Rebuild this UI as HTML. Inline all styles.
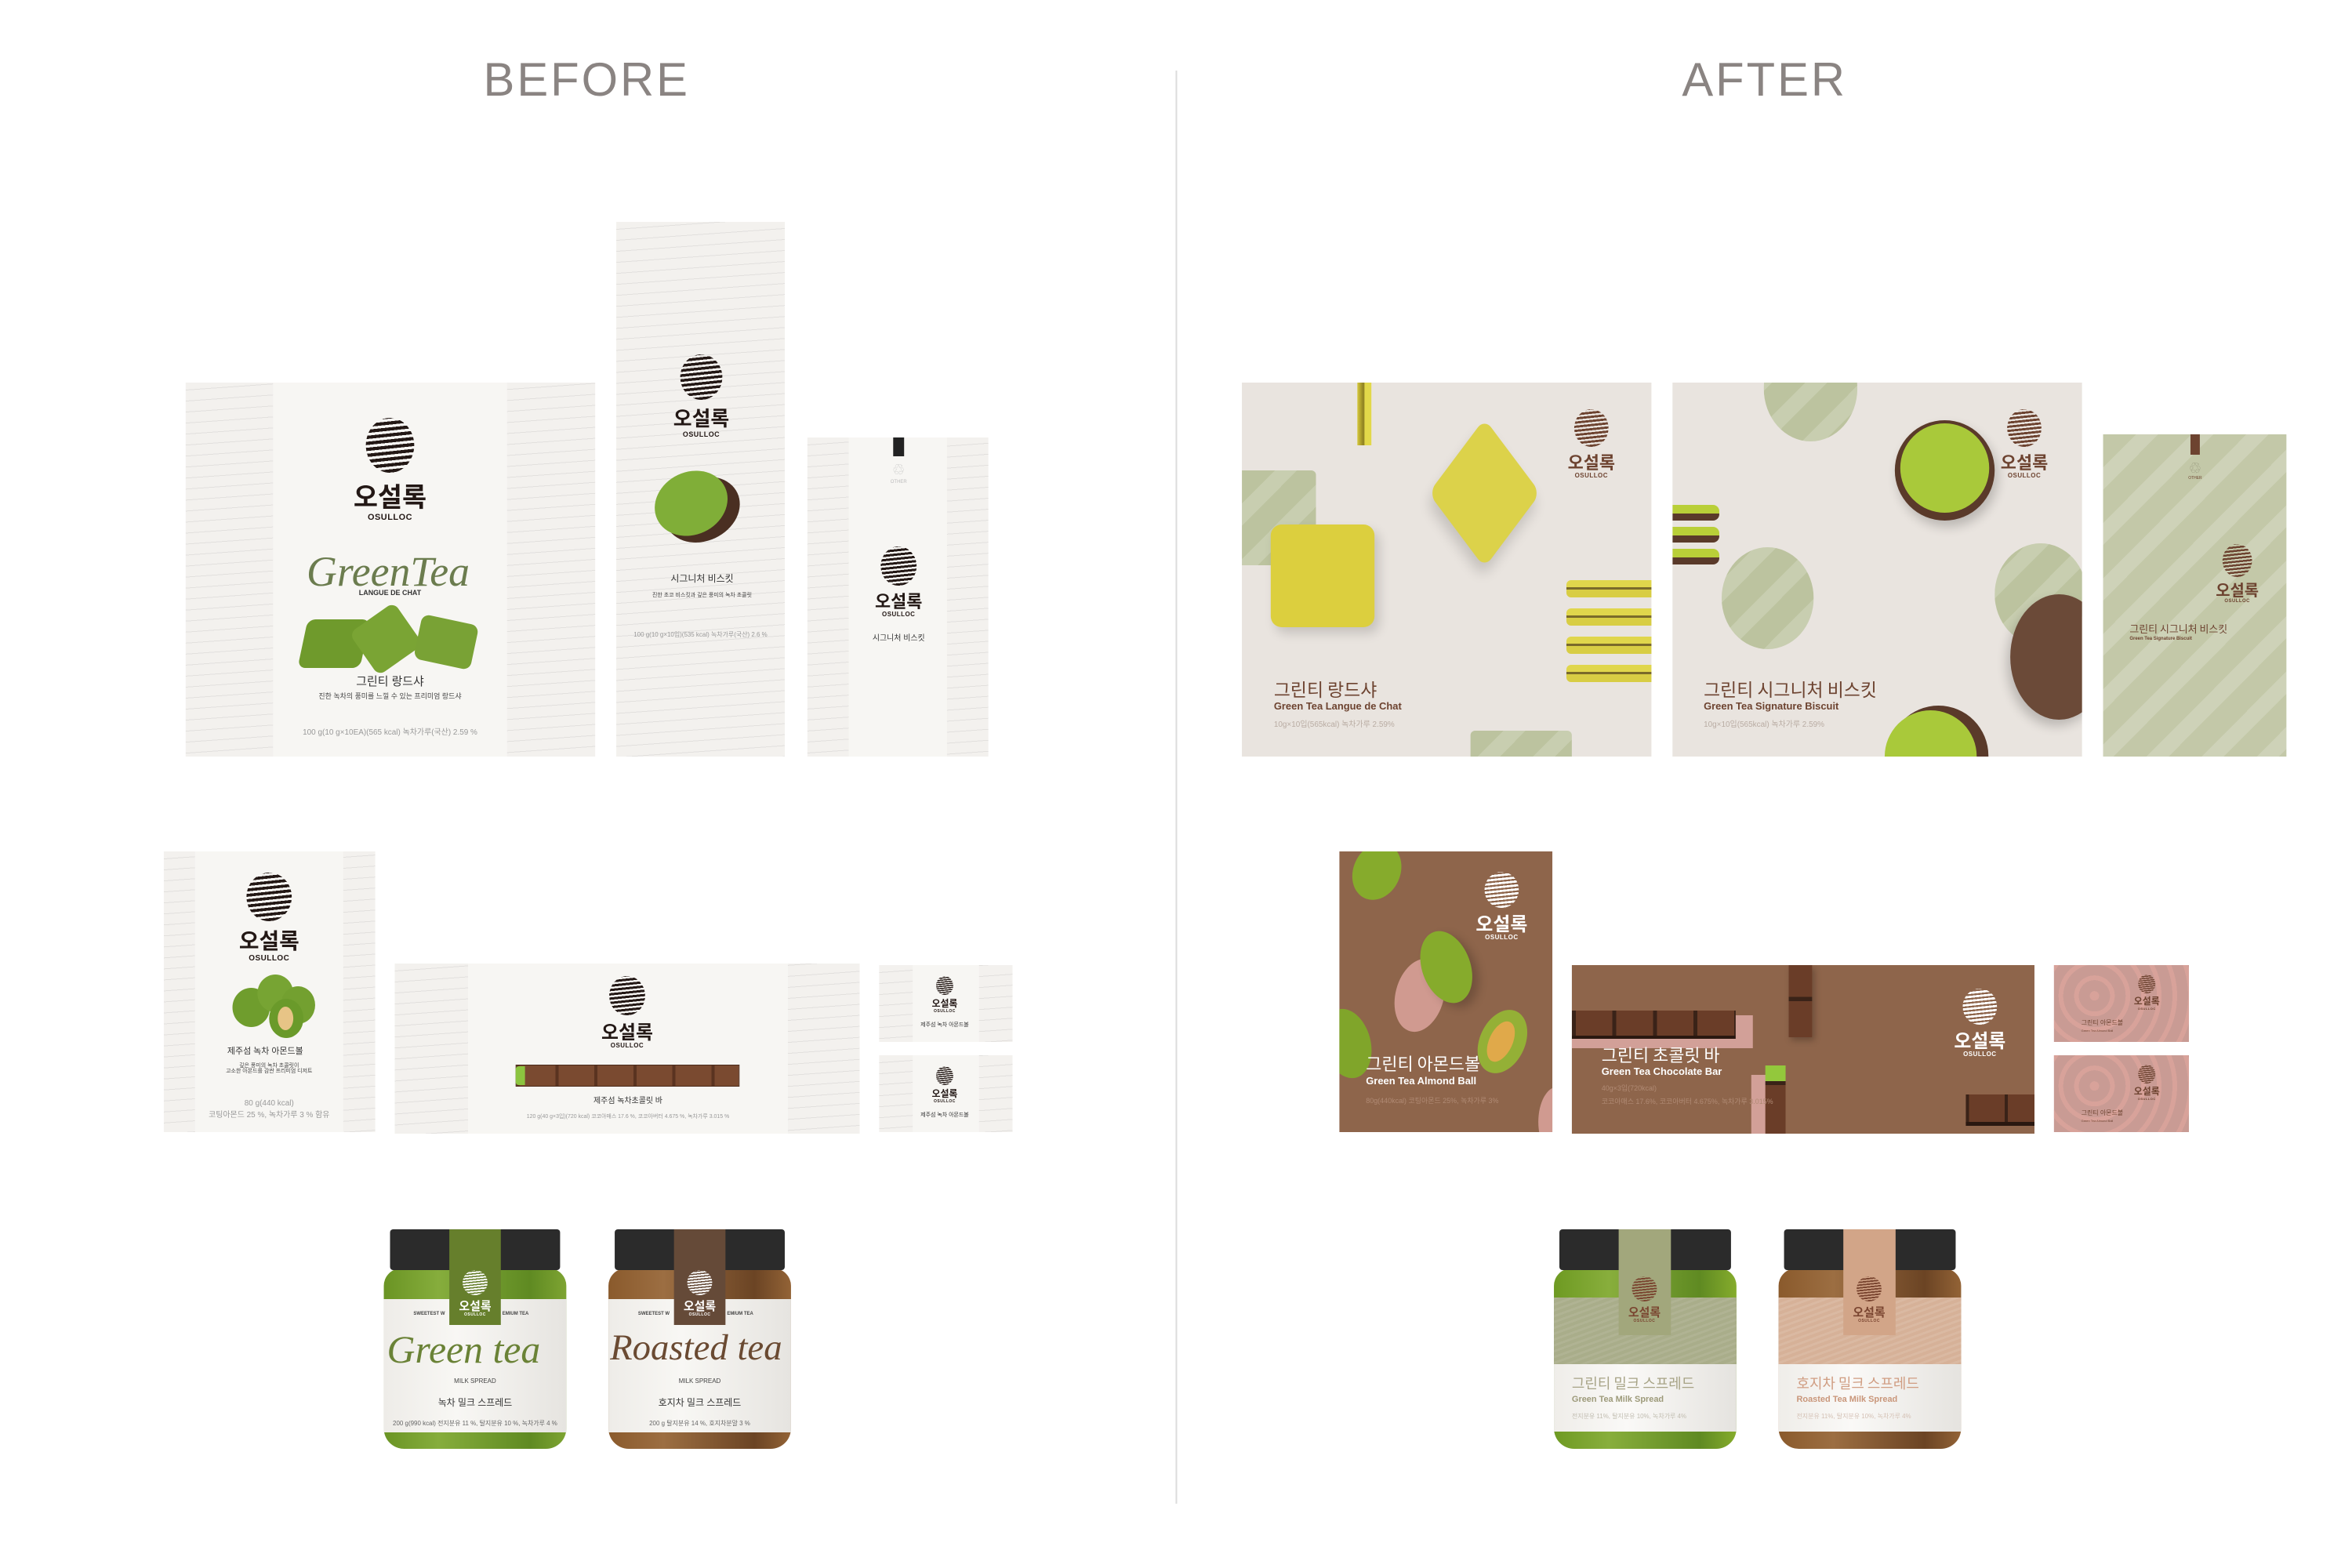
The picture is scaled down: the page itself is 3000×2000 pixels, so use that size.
<!DOCTYPE html>
<html><head><meta charset="utf-8">
<style>
*{margin:0;padding:0;box-sizing:border-box}
body{width:3000px;height:2000px;background:#fff;position:relative;overflow:hidden;font-family:"Liberation Sans","Noto Sans CJK KR",sans-serif}
#w{position:absolute;left:0;top:0;width:3000px;height:2000px;transform:scaleX(0.995);transform-origin:0 0}
.a{position:absolute}
.t{position:absolute;white-space:nowrap;line-height:1}
.c{text-align:center}
.wave{background:#f3f1ee repeating-linear-gradient(176deg,transparent 0 9px,rgba(0,0,0,.07) 9px 10px,transparent 10px 14px)}
.ctr{background:#f7f6f3}
.lg{position:absolute;display:flex;flex-direction:column;align-items:center;width:240px;margin-left:-120px}
.mk{border-radius:50%;background:repeating-linear-gradient(174deg,var(--k) 0 5.5%,transparent 5.5% 10%)}
.ko{font-family:"Noto Sans CJK KR",sans-serif;font-weight:700;line-height:1;color:var(--k)}
.en{font-weight:700;line-height:1;color:var(--k);letter-spacing:.5px}
.script{font-family:"Liberation Serif",serif;font-style:italic;position:absolute;white-space:nowrap;line-height:1}
.gp{background:#bcc39f repeating-linear-gradient(135deg,rgba(255,255,255,.0) 0 30px,rgba(255,255,255,.18) 30px 50px)}
</style></head><body><div id="w">

<div class="t c" style="left:552px;top:72px;width:400px;font-size:60px;color:#8a8482;letter-spacing:3px">BEFORE</div>
<div class="t c" style="left:2062px;top:72px;width:400px;font-size:60px;color:#8a8482;letter-spacing:3px">AFTER</div>
<div class="a" style="left:1507px;top:90px;width:2px;height:1828px;background:#dcdcdc"></div>

<!-- BEFORE row1 -->
<div class="a wave" style="left:238px;top:488px;width:525px;height:477px"></div>
<div class="a ctr" style="left:350px;top:488px;width:300px;height:477px"></div>
<div class="lg" style="left:500px;top:533px;--k:#231815"><div class="mk" style="width:62px;height:70px"></div><div class="ko" style="font-size:34px;margin-top:12px">오설록</div><div class="en" style="font-size:11px;margin-top:6px">OSULLOC</div></div>
<div class="script" style="left:393px;top:702px;font-size:54px;color:#6b7c4e">GreenTea</div>
<div class="t c" style="left:400px;top:752px;width:200px;font-size:9px;font-weight:700;color:#333">LANGUE DE CHAT</div>
<div class="a" style="left:388px;top:790px;width:80px;height:62px;background:#6f9a2c;border-radius:10px;transform:skewX(-12deg)"></div>
<div class="a" style="left:460px;top:782px;width:70px;height:66px;background:#7aa434;border-radius:10px;transform:rotate(-35deg)"></div>
<div class="a" style="left:535px;top:790px;width:74px;height:58px;background:#79a235;border-radius:10px;transform:rotate(12deg)"></div>
<div class="t c" style="left:400px;top:862px;width:200px;font-size:15px;color:#333">그린티 랑드샤</div>
<div class="t c" style="left:380px;top:884px;width:240px;font-size:9px;color:#444">진한 녹차의 풍미를 느낄 수 있는 프리미엄 랑드샤</div>
<div class="t c" style="left:370px;top:930px;width:260px;font-size:10px;color:#999">100 g(10 g×10EA)(565 kcal) 녹차가루(국산) 2.59 %</div>

<div class="a wave" style="left:790px;top:283px;width:216px;height:682px"></div>
<div class="lg" style="left:899px;top:452px;--k:#231815"><div class="mk" style="width:54px;height:58px"></div><div class="ko" style="font-size:26px;margin-top:10px">오설록</div><div class="en" style="font-size:9px;margin-top:4px">OSULLOC</div></div>
<div class="a" style="left:850px;top:610px;width:100px;height:80px;border-radius:50%;background:#4a2f22;transform:rotate(-25deg)"></div>
<div class="a" style="left:838px;top:602px;width:96px;height:80px;border-radius:50%;background:#80ae38;transform:rotate(-25deg)"></div>
<div class="t c" style="left:820px;top:732px;width:160px;font-size:12px;color:#333">시그니처 비스킷</div>
<div class="t c" style="left:810px;top:756px;width:180px;font-size:7px;color:#444">진한 초코 비스킷과 깊은 풍미의 녹차 초콜릿</div>
<div class="t c" style="left:795px;top:806px;width:206px;font-size:8px;color:#999">100 g(10 g×10입)(535 kcal) 녹차가루(국산) 2.6 %</div>

<div class="a wave" style="left:1035px;top:558px;width:232px;height:407px"></div>
<div class="a ctr" style="left:1088px;top:558px;width:126px;height:407px"></div>
<div class="a" style="left:1145px;top:558px;width:14px;height:24px;background:#222"></div>
<div class="t c" style="left:1120px;top:592px;width:64px;font-size:14px;color:#bbb">♲</div>
<div class="t c" style="left:1120px;top:612px;width:64px;font-size:6px;color:#bbb">OTHER</div>
<div class="lg" style="left:1152px;top:697px;--k:#231815"><div class="mk" style="width:46px;height:50px"></div><div class="ko" style="font-size:22px;margin-top:8px">오설록</div><div class="en" style="font-size:8px;margin-top:3px">OSULLOC</div></div>
<div class="t c" style="left:1100px;top:810px;width:104px;font-size:10px;color:#333">시그니처 비스킷</div>

<!-- BEFORE row2 -->
<div class="a wave" style="left:210px;top:1086px;width:271px;height:358px"></div>
<div class="a ctr" style="left:250px;top:1086px;width:190px;height:358px"></div>
<div class="lg" style="left:345px;top:1113px;--k:#231815"><div class="mk" style="width:58px;height:62px"></div><div class="ko" style="font-size:28px;margin-top:10px">오설록</div><div class="en" style="font-size:10px;margin-top:5px">OSULLOC</div></div>
<div class="a" style="left:298px;top:1260px;width:48px;height:50px;border-radius:50%;background:#6f9d2d"></div>
<div class="a" style="left:330px;top:1243px;width:46px;height:48px;border-radius:50%;background:#77a433"></div>
<div class="a" style="left:360px;top:1258px;width:44px;height:48px;border-radius:50%;background:#73a030"></div>
<div class="a" style="left:345px;top:1274px;width:44px;height:50px;border-radius:50%;background:#6a9a2a"></div>
<div class="a" style="left:356px;top:1284px;width:20px;height:30px;border-radius:50%;background:#e7c486"></div>
<div class="t c" style="left:240px;top:1336px;width:200px;font-size:11px;color:#333">제주섬 녹차 아몬드볼</div>
<div class="t c" style="left:250px;top:1356px;width:190px;font-size:7px;color:#444">깊은 풍미의 녹차 초콜릿이<br>고소한 아몬드를 감싼 프리미엄 디저트</div>
<div class="t c" style="left:230px;top:1403px;width:230px;font-size:10px;color:#999">80 g(440 kcal)</div>
<div class="t c" style="left:230px;top:1418px;width:230px;font-size:10px;color:#999">코팅아몬드 25 %, 녹차가루 3 % 함유</div>

<div class="a wave" style="left:506px;top:1229px;width:596px;height:217px"></div>
<div class="a ctr" style="left:600px;top:1229px;width:410px;height:217px"></div>
<div class="lg" style="left:804px;top:1245px;--k:#231815"><div class="mk" style="width:46px;height:50px"></div><div class="ko" style="font-size:24px;margin-top:8px">오설록</div><div class="en" style="font-size:8px;margin-top:3px">OSULLOC</div></div>
<div class="a" style="left:661px;top:1358px;width:287px;height:28px;background:repeating-linear-gradient(90deg,#5a3320 0 4px,#7a4a30 4px 50px);border:1px solid #4a2a1a"></div>
<div class="a" style="left:661px;top:1360px;width:12px;height:24px;background:#8cc43f;border-radius:4px 0 0 4px"></div>
<div class="t c" style="left:700px;top:1400px;width:210px;font-size:10px;color:#333">제주섬 녹차초콜릿 바</div>
<div class="t c" style="left:600px;top:1421px;width:410px;font-size:7px;color:#999">120 g(40 g×3입)(720 kcal) 코코아매스 17.6 %, 코코아버터 4.675 %, 녹차가루 3.015 %</div>

<div class="a wave" style="left:1127px;top:1231px;width:171px;height:98px"></div>
<div class="a ctr" style="left:1170px;top:1231px;width:85px;height:98px"></div>
<div class="lg" style="left:1211px;top:1245px;--k:#231815"><div class="mk" style="width:22px;height:24px"></div><div class="ko" style="font-size:12px;margin-top:5px">오설록</div><div class="en" style="font-size:5px;margin-top:2px">OSULLOC</div></div>
<div class="t c" style="left:1161px;top:1304px;width:100px;font-size:7px;color:#333">제주섬 녹차 아몬드볼</div>
<div class="a wave" style="left:1127px;top:1346px;width:171px;height:98px"></div>
<div class="a ctr" style="left:1170px;top:1346px;width:85px;height:98px"></div>
<div class="lg" style="left:1211px;top:1360px;--k:#231815"><div class="mk" style="width:22px;height:24px"></div><div class="ko" style="font-size:12px;margin-top:5px">오설록</div><div class="en" style="font-size:5px;margin-top:2px">OSULLOC</div></div>
<div class="t c" style="left:1161px;top:1419px;width:100px;font-size:7px;color:#333">제주섬 녹차 아몬드볼</div>

<!-- BEFORE jars -->
<div class="a" style="left:492px;top:1618px;width:234px;height:230px;border-radius:22px 22px 26px 26px;background:linear-gradient(90deg,#6a9424,#86ad3c 30%,#5f8a22 80%,#7ea432)"></div>
<div class="a" style="left:500px;top:1568px;width:218px;height:52px;border-radius:4px;background:#2b2b2b"></div>
<div class="a" style="left:492px;top:1657px;width:234px;height:170px;background:linear-gradient(90deg,#eeece8,#f8f7f4 40%,#e6e4e0)"></div>
<div class="a" style="left:576px;top:1568px;width:66px;height:122px;background:#667f2c"></div>
<div class="lg" style="left:609px;top:1620px;--k:#fff"><div class="mk" style="width:32px;height:32px"></div><div class="ko" style="font-size:15px;margin-top:6px">오설록</div><div class="en" style="font-size:5px;margin-top:2px">OSULLOC</div></div>
<div class="t" style="left:530px;top:1673px;font-size:6px;color:#444;font-weight:700">SWEETEST W</div>
<div class="t" style="left:644px;top:1673px;font-size:6px;color:#444;font-weight:700">EMIUM TEA</div>
<div class="script" style="left:496px;top:1696px;font-size:50px;color:#6a8236">Green tea</div>
<div class="t c" style="left:559px;top:1758px;width:100px;font-size:8px;color:#444">MILK SPREAD</div>
<div class="t c" style="left:529px;top:1783px;width:160px;font-size:12px;color:#333">녹차 밀크 스프레드</div>
<div class="t c" style="left:492px;top:1812px;width:234px;font-size:8px;color:#666">200 g(990 kcal) 전지분유 11 %, 탈지분유 10 %, 녹차가루 4 %</div>

<div class="a" style="left:780px;top:1618px;width:234px;height:230px;border-radius:22px 22px 26px 26px;background:linear-gradient(90deg,#8a5a2c,#9c6e42 30%,#6b4424 80%,#936336)"></div>
<div class="a" style="left:788px;top:1568px;width:218px;height:52px;border-radius:4px;background:#2b2b2b"></div>
<div class="a" style="left:780px;top:1657px;width:234px;height:170px;background:linear-gradient(90deg,#eeece8,#f8f7f4 40%,#e6e4e0)"></div>
<div class="a" style="left:864px;top:1568px;width:66px;height:122px;background:#654a38"></div>
<div class="lg" style="left:897px;top:1620px;--k:#fff"><div class="mk" style="width:32px;height:32px"></div><div class="ko" style="font-size:15px;margin-top:6px">오설록</div><div class="en" style="font-size:5px;margin-top:2px">OSULLOC</div></div>
<div class="t" style="left:818px;top:1673px;font-size:6px;color:#444;font-weight:700">SWEETEST W</div>
<div class="t" style="left:932px;top:1673px;font-size:6px;color:#444;font-weight:700">EMIUM TEA</div>
<div class="script" style="left:782px;top:1696px;font-size:47px;color:#6a4a32">Roasted tea</div>
<div class="t c" style="left:847px;top:1758px;width:100px;font-size:8px;color:#444">MILK SPREAD</div>
<div class="t c" style="left:817px;top:1783px;width:160px;font-size:12px;color:#333">호지차 밀크 스프레드</div>
<div class="t c" style="left:780px;top:1812px;width:234px;font-size:8px;color:#666">200 g 탈지분유 14 %, 호지차분말 3 %</div>

<!-- AFTER row1 -->
<div class="a" style="left:1592px;top:488px;width:525px;height:477px;background:#e9e4df;overflow:hidden">
 <div class="a gp" style="left:0;top:112px;width:95px;height:121px;border-radius:0 6px 6px 0"></div>
 <div class="a gp" style="left:293px;top:444px;width:130px;height:40px;border-radius:6px"></div>
 <div class="a" style="left:148px;top:0;width:18px;height:80px;background:linear-gradient(90deg,#d7c93c,#8a7c20 45%,#e2d84a 55%)"></div>
 <div class="a" style="left:252px;top:82px;width:118px;height:118px;background:#dcd24a;border-radius:14px;transform:rotate(45deg) skew(8deg,8deg);box-shadow:6px 10px 16px rgba(0,0,0,.15)"></div>
 <div class="a" style="left:37px;top:181px;width:133px;height:131px;background:#dccf3e;border-radius:14px;box-shadow:6px 8px 14px rgba(0,0,0,.15)"></div>
 <div class="a" style="left:416px;top:252px;width:120px;height:22px;background:linear-gradient(#e0d64c 0 40%,#7a6a2a 40% 55%,#d8cd44 55%);border-radius:6px"></div>
 <div class="a" style="left:416px;top:288px;width:120px;height:22px;background:linear-gradient(#e0d64c 0 40%,#7a6a2a 40% 55%,#d8cd44 55%);border-radius:6px"></div>
 <div class="a" style="left:416px;top:324px;width:120px;height:22px;background:linear-gradient(#e0d64c 0 40%,#7a6a2a 40% 55%,#d8cd44 55%);border-radius:6px"></div>
 <div class="a" style="left:416px;top:360px;width:120px;height:22px;background:linear-gradient(#e0d64c 0 40%,#7a6a2a 40% 55%,#d8cd44 55%);border-radius:6px"></div>
</div>
<div class="lg" style="left:2040px;top:522px;--k:#6d4330"><div class="mk" style="width:44px;height:48px"></div><div class="ko" style="font-size:22px;margin-top:8px">오설록</div><div class="en" style="font-size:8px;margin-top:3px">OSULLOC</div></div>
<div class="t" style="left:1633px;top:867px;font-size:23px;color:#6d4330;font-family:'Noto Sans CJK KR',sans-serif">그린티 랑드샤</div>
<div class="t" style="left:1633px;top:894px;font-size:13px;color:#6d4330;font-weight:700">Green Tea Langue de Chat</div>
<div class="t" style="left:1633px;top:920px;font-size:10px;color:#b9aca3">10g×10입(565kcal) 녹차가루 2.59%</div>

<div class="a" style="left:2144px;top:488px;width:525px;height:477px;background:#e9e4df;overflow:hidden">
 <div class="a gp" style="left:117px;top:-60px;width:120px;height:135px;border-radius:50%"></div>
 <div class="a gp" style="left:63px;top:210px;width:118px;height:130px;border-radius:50%"></div>
 <div class="a gp" style="left:413px;top:205px;width:118px;height:130px;border-radius:50%"></div>
 <div class="a" style="left:433px;top:270px;width:125px;height:160px;border-radius:50%;background:#6b4a38;box-shadow:-4px 8px 14px rgba(0,0,0,.2)"></div>
 <div class="a" style="left:0;top:156px;width:60px;height:20px;background:linear-gradient(#b9cf38 0 55%,#5a3a2a 55%);border-radius:0 8px 8px 0"></div>
 <div class="a" style="left:0;top:184px;width:60px;height:20px;background:linear-gradient(#b9cf38 0 55%,#5a3a2a 55%);border-radius:0 8px 8px 0"></div>
 <div class="a" style="left:0;top:212px;width:60px;height:20px;background:linear-gradient(#b9cf38 0 55%,#5a3a2a 55%);border-radius:0 8px 8px 0"></div>
 <div class="a" style="left:285px;top:48px;width:128px;height:128px;border-radius:50%;background:#5a3a2a;box-shadow:4px 8px 14px rgba(0,0,0,.2)"></div>
 <div class="a" style="left:292px;top:52px;width:114px;height:114px;border-radius:50%;background:#a9c93a"></div>
 <div class="a" style="left:277px;top:412px;width:128px;height:128px;border-radius:50%;background:#5a3a2a"></div>
 <div class="a" style="left:272px;top:418px;width:118px;height:118px;border-radius:50%;background:#a9c93a"></div>
</div>
<div class="lg" style="left:2595px;top:522px;--k:#6d4330"><div class="mk" style="width:44px;height:48px"></div><div class="ko" style="font-size:22px;margin-top:8px">오설록</div><div class="en" style="font-size:8px;margin-top:3px">OSULLOC</div></div>
<div class="t" style="left:2184px;top:867px;font-size:23px;color:#6d4330;font-family:'Noto Sans CJK KR',sans-serif">그린티 시그니처 비스킷</div>
<div class="t" style="left:2184px;top:894px;font-size:13px;color:#6d4330;font-weight:700">Green Tea Signature Biscuit</div>
<div class="t" style="left:2184px;top:920px;font-size:10px;color:#b9aca3">10g×10입(565kcal) 녹차가루 2.59%</div>

<div class="a gp" style="left:2696px;top:554px;width:235px;height:411px;background-color:#c3c8a8"></div>
<div class="a" style="left:2808px;top:554px;width:12px;height:26px;background:#6d4330"></div>
<div class="t c" style="left:2794px;top:590px;width:40px;font-size:14px;color:#8a8a70">♲</div>
<div class="t c" style="left:2794px;top:608px;width:40px;font-size:5px;color:#6d4330">OTHER</div>
<div class="lg" style="left:2868px;top:694px;--k:#6d4330"><div class="mk" style="width:38px;height:42px"></div><div class="ko" style="font-size:20px;margin-top:6px">오설록</div><div class="en" style="font-size:6px;margin-top:2px">OSULLOC</div></div>
<div class="t" style="left:2730px;top:795px;font-size:13px;color:#6d4330;font-family:'Noto Sans CJK KR',sans-serif">그린티 시그니처 비스킷</div>
<div class="t" style="left:2730px;top:812px;font-size:6px;color:#6d4330;font-weight:700">Green Tea Signature Biscuit</div>

<!-- AFTER row2 -->
<div class="a" style="left:1717px;top:1086px;width:273px;height:358px;background:#8e654b;overflow:hidden">
 <div class="a" style="left:18px;top:-12px;width:60px;height:75px;border-radius:50%;background:#86ab2c;transform:rotate(25deg)"></div>
 <div class="a" style="left:72px;top:136px;width:62px;height:95px;border-radius:50%;background:#d09a90;transform:rotate(15deg)"></div>
 <div class="a" style="left:106px;top:100px;width:62px;height:95px;border-radius:50%;background:#86ab2c;transform:rotate(-20deg);box-shadow:6px 8px 12px rgba(0,0,0,.2)"></div>
 <div class="a" style="left:-20px;top:200px;width:60px;height:90px;border-radius:50%;background:#80a52a;transform:rotate(-15deg)"></div>
 <div class="a" style="left:180px;top:200px;width:58px;height:85px;border-radius:50%;background:#94b036;transform:rotate(25deg)"></div>
 <div class="a" style="left:192px;top:215px;width:30px;height:55px;border-radius:50%;background:#e0a94a;transform:rotate(25deg)"></div>
 <div class="a" style="left:255px;top:300px;width:50px;height:90px;border-radius:50%;background:#d09a90"></div>
</div>
<div class="lg" style="left:1925px;top:1112px;--k:#fff"><div class="mk" style="width:44px;height:46px"></div><div class="ko" style="font-size:24px;margin-top:7px">오설록</div><div class="en" style="font-size:8px;margin-top:3px">OSULLOC</div></div>
<div class="t" style="left:1751px;top:1345px;font-size:22px;color:#fff;font-family:'Noto Sans CJK KR',sans-serif">그린티 아몬드볼</div>
<div class="t" style="left:1751px;top:1372px;font-size:13px;color:#fff;font-weight:700">Green Tea Almond Ball</div>
<div class="t" style="left:1751px;top:1400px;font-size:9px;color:#b08a74">80g(440kcal) 코팅아몬드 25%, 녹차가루 3%</div>

<div class="a" style="left:2015px;top:1231px;width:593px;height:215px;background:#8e654b;overflow:hidden">
 <div class="a" style="left:0;top:64px;width:232px;height:42px;background:#d2a098"></div>
 <div class="a" style="left:0;top:58px;width:210px;height:36px;background:repeating-linear-gradient(90deg,#3a2318 0 5px,#6a3d28 5px 52px);border-bottom:4px solid #2a1810"></div>
 <div class="a" style="left:278px;top:0;width:30px;height:92px;background:linear-gradient(#6a3d28 0 44%,#3a2318 44% 50%,#6a3d28 50%);box-shadow:3px 4px 8px rgba(0,0,0,.25)"></div>
 <div class="a" style="left:230px;top:140px;width:22px;height:80px;background:#d2a098"></div>
 <div class="a" style="left:248px;top:128px;width:26px;height:90px;background:linear-gradient(#93c83c 0 22%,#3a2318 22% 28%,#6a3d28 28%)"></div>
 <div class="a" style="left:505px;top:165px;width:90px;height:40px;background:repeating-linear-gradient(90deg,#3a2318 0 4px,#6a3d28 4px 50px);border-bottom:5px solid #2a1810"></div>
</div>
<div class="lg" style="left:2538px;top:1261px;--k:#fff"><div class="mk" style="width:44px;height:46px"></div><div class="ko" style="font-size:24px;margin-top:7px">오설록</div><div class="en" style="font-size:8px;margin-top:3px">OSULLOC</div></div>
<div class="t" style="left:2053px;top:1334px;font-size:22px;color:#fff;font-family:'Noto Sans CJK KR',sans-serif">그린티 초콜릿 바</div>
<div class="t" style="left:2053px;top:1360px;font-size:13px;color:#fff;font-weight:700">Green Tea Chocolate Bar</div>
<div class="t" style="left:2053px;top:1384px;font-size:9px;color:#b08a74">40g×3입(720kcal)</div>
<div class="t" style="left:2053px;top:1401px;font-size:9px;color:#b08a74">코코아매스 17.6%, 코코아버터 4.675%, 녹차가루 3.015%</div>

<div class="a" style="left:2633px;top:1231px;width:173px;height:98px;background:#c99b94 repeating-radial-gradient(circle at 30% 40%,rgba(230,170,160,.5) 0 6px,transparent 6px 20px)"></div>
<div class="lg" style="left:2752px;top:1243px;--k:#6d4330"><div class="mk" style="width:22px;height:24px"></div><div class="ko" style="font-size:12px;margin-top:4px">오설록</div><div class="en" style="font-size:4px;margin-top:2px">OSULLOC</div></div>
<div class="t" style="left:2668px;top:1301px;font-size:8px;color:#6d4330">그린티 아몬드볼</div>
<div class="t" style="left:2668px;top:1313px;font-size:4px;color:#6d4330">Green Tea Almond Ball</div>
<div class="a" style="left:2633px;top:1346px;width:173px;height:98px;background:#c99b94 repeating-radial-gradient(circle at 30% 40%,rgba(230,170,160,.5) 0 6px,transparent 6px 20px)"></div>
<div class="lg" style="left:2752px;top:1358px;--k:#6d4330"><div class="mk" style="width:22px;height:24px"></div><div class="ko" style="font-size:12px;margin-top:4px">오설록</div><div class="en" style="font-size:4px;margin-top:2px">OSULLOC</div></div>
<div class="t" style="left:2668px;top:1416px;font-size:8px;color:#6d4330">그린티 아몬드볼</div>
<div class="t" style="left:2668px;top:1428px;font-size:4px;color:#6d4330">Green Tea Almond Ball</div>

<!-- AFTER jars -->
<div class="a" style="left:1992px;top:1618px;width:234px;height:230px;border-radius:22px 22px 26px 26px;background:linear-gradient(90deg,#6e9a22,#88ae3c 30%,#5f8a22 80%,#86ac2c)"></div>
<div class="a" style="left:1999px;top:1568px;width:220px;height:52px;border-radius:4px;background:#2b2b2b"></div>
<div class="a" style="left:1992px;top:1655px;width:234px;height:85px;background:#a9ad8a repeating-linear-gradient(160deg,rgba(255,255,255,.08) 0 3px,transparent 3px 7px)"></div>
<div class="a" style="left:1992px;top:1740px;width:234px;height:86px;background:linear-gradient(90deg,#efede9,#faf9f7 40%,#e5e3df)"></div>
<div class="a" style="left:2075px;top:1568px;width:67px;height:135px;background:#a2a77c"></div>
<div class="lg" style="left:2108px;top:1628px;--k:#7a4530"><div class="mk" style="width:32px;height:32px"></div><div class="ko" style="font-size:15px;margin-top:6px">오설록</div><div class="en" style="font-size:5px;margin-top:2px">OSULLOC</div></div>
<div class="t" style="left:2015px;top:1755px;font-size:18px;color:#a7a386;font-family:'Noto Sans CJK KR',sans-serif">그린티 밀크 스프레드</div>
<div class="t" style="left:2015px;top:1780px;font-size:11px;color:#9d9a7a;font-weight:700">Green Tea Milk Spread</div>
<div class="t" style="left:2015px;top:1803px;font-size:8px;color:#c0bcb0">전지분유 11%, 탈지분유 10%, 녹차가루 4%</div>

<div class="a" style="left:2280px;top:1618px;width:234px;height:230px;border-radius:22px 22px 26px 26px;background:linear-gradient(90deg,#8a5a2c,#9c6e42 30%,#6b4424 80%,#936336)"></div>
<div class="a" style="left:2287px;top:1568px;width:220px;height:52px;border-radius:4px;background:#2b2b2b"></div>
<div class="a" style="left:2280px;top:1655px;width:234px;height:85px;background:#d6b198 repeating-linear-gradient(160deg,rgba(255,255,255,.1) 0 3px,transparent 3px 7px)"></div>
<div class="a" style="left:2280px;top:1740px;width:234px;height:86px;background:linear-gradient(90deg,#efede9,#faf9f7 40%,#e5e3df)"></div>
<div class="a" style="left:2363px;top:1568px;width:67px;height:135px;background:#d2a588"></div>
<div class="lg" style="left:2396px;top:1628px;--k:#7a4530"><div class="mk" style="width:32px;height:32px"></div><div class="ko" style="font-size:15px;margin-top:6px">오설록</div><div class="en" style="font-size:5px;margin-top:2px">OSULLOC</div></div>
<div class="t" style="left:2303px;top:1755px;font-size:18px;color:#d09d82;font-family:'Noto Sans CJK KR',sans-serif">호지차 밀크 스프레드</div>
<div class="t" style="left:2303px;top:1780px;font-size:11px;color:#c9967a;font-weight:700">Roasted Tea Milk Spread</div>
<div class="t" style="left:2303px;top:1803px;font-size:8px;color:#d4c0b4">전지분유 11%, 탈지분유 10%, 녹차가루 4%</div>

</div></body></html>
